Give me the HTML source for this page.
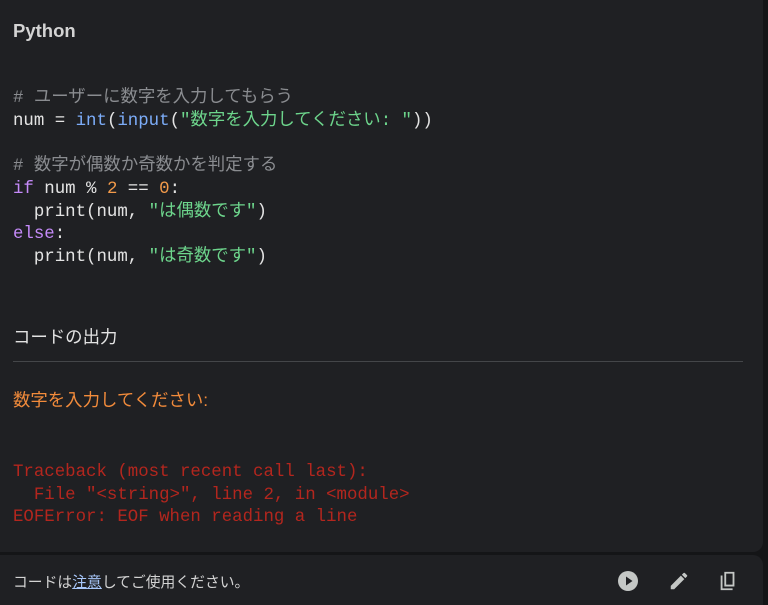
<!DOCTYPE html>
<html><head><meta charset="utf-8"><style>
body{margin:0;width:768px;height:605px;background:#141517;overflow:hidden;font-family:"Liberation Sans","Noto Sans CJK JP",sans-serif;position:relative}
.p{position:absolute;left:0;top:0;width:763px;height:552px;background:#1f2023;border-radius:0 0 10px 0}
.f{position:absolute;left:0;top:555px;width:763px;height:50px;background:#1f2023;border-radius:0 10px 0 0}
.t{position:absolute;left:13px;white-space:pre}
.code{font-family:"Liberation Mono","Noto Sans CJK JP",monospace;font-size:17.4px;line-height:22.7px;color:#e3e3e3}
.c{color:#8a8c90}.k{color:#c58af9}.b{color:#7cacf8}.s{color:#6dd58c}.n{color:#f29a4a}
.err{font-family:"Liberation Mono",monospace;font-size:17.4px;line-height:22.5px;color:#b3261e}
</style></head><body>
<div class="p"></div><div class="f"></div>
<div class="t" style="top:20px;font-size:18.5px;font-weight:bold;color:#d3d3d3">Python</div>
<div class="t code" style="top:88px"><span class="c"># ユーザーに数字を入力してもらう</span>
num = <span class="b">int</span>(<span class="b">input</span>(<span class="s">"数字を入力してください: "</span>))

<span class="c"># 数字が偶数か奇数かを判定する</span>
<span class="k">if</span> num % <span class="n">2</span> == <span class="n">0</span>:
  print(num, <span class="s">"は偶数です"</span>)
<span class="k">else</span>:
  print(num, <span class="s">"は奇数です"</span>)</div>
<div class="t" style="top:324px;font-size:17.4px;color:#e3e3e3">コードの出力</div>
<div style="position:absolute;left:13px;top:361px;width:730px;height:1px;background:#444649"></div>
<div class="t" style="top:387px;font-size:17.4px;color:#f28b3b">数字を入力してください:</div>
<div class="t err" style="top:462px">Traceback (most recent call last):
  File "&lt;string&gt;", line 2, in &lt;module&gt;
EOFError: EOF when reading a line</div>
<div class="t" style="top:571px;font-size:14.8px;color:#d3d3d3">コードは<span style="color:#a8c7fa;text-decoration:underline">注意</span>してご使用ください。</div>
<svg style="position:absolute;left:617px;top:570px" width="22" height="22" viewBox="0 0 22 22"><circle cx="11" cy="11" r="10" fill="#c4c7c5"/><path d="M9 6.5v9l6.5-4.5z" fill="#1f2023"/></svg>
<svg style="position:absolute;left:668px;top:570px" width="22" height="22" viewBox="0 0 24 24"><path d="M3 17.25V21h3.75L17.81 9.94l-3.75-3.75L3 17.25zM20.71 7.04a1 1 0 000-1.41l-2.34-2.34a1 1 0 00-1.41 0l-1.83 1.83 3.75 3.75 1.83-1.83z" fill="#c4c7c5"/></svg>
<svg style="position:absolute;left:717px;top:570px" width="22" height="22" viewBox="0 0 24 24"><path d="M4 6h2v14h11v2H4z M8 2h11v16H8z M10 4v12h7V4z" fill="#c4c7c5" fill-rule="evenodd"/></svg>
</body></html>
